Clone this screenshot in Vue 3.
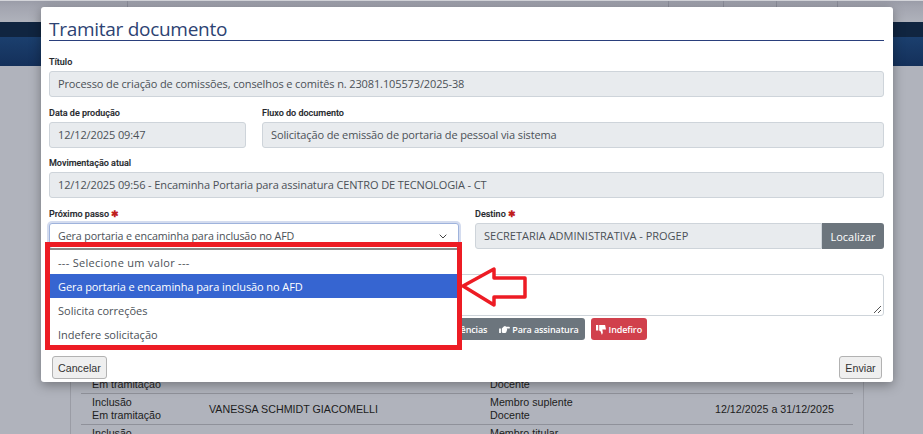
<script setup>
const options = [
  { text: '--- Selecione um valor ---', cls: 'placeholder' },
  { text: 'Gera portaria e encaminha para inclusão no AFD', cls: 'on' },
  { text: 'Solicita correções', cls: '' },
  { text: 'Indefere solicitação', cls: '' }
]
</script>

<template>
  <div class="page">
    <div class="topstrip">
      <i class="tick t1"></i><i class="tick t2"></i><i class="tick t3"></i><i class="tick t4"></i><i class="tick t5"></i>
    </div>
    <div class="nav-dark"></div>
    <div class="nav-blue"></div>
    <div class="panel">
      <div class="row first">
        <div class="c1"><span>Em tramitação</span></div>
        <div class="c2"></div>
        <div class="c3"><span>Docente</span></div>
        <div class="c4"></div>
      </div>
      <div class="row">
        <div class="c1"><span>Inclusão</span><span>Em tramitação</span></div>
        <div class="c2">VANESSA SCHMIDT GIACOMELLI</div>
        <div class="c3"><span>Membro suplente</span><span>Docente</span></div>
        <div class="c4">12/12/2025 a 31/12/2025</div>
      </div>
      <div class="row last">
        <div class="c1"><span>Inclusão</span></div>
        <div class="c2"></div>
        <div class="c3"><span>Membro titular</span></div>
        <div class="c4"></div>
      </div>
    </div>

    <div class="modal">
      <h1 class="title">Tramitar documento</h1>
      <div class="field f1">
        <label>Título</label>
        <div class="input ro">Processo de criação de comissões, conselhos e comitês n. 23081.105573/2025-38</div>
      </div>
      <div class="cols f2">
        <div class="field date">
          <label>Data de produção</label>
          <div class="input ro">12/12/2025 09:47</div>
        </div>
        <div class="field grow">
          <label>Fluxo do documento</label>
          <div class="input ro">Solicitação de emissão de portaria de pessoal via sistema</div>
        </div>
      </div>
      <div class="field f3">
        <label>Movimentação atual</label>
        <div class="input ro">12/12/2025 09:56 - Encaminha Portaria para assinatura CENTRO DE TECNOLOGIA - CT</div>
      </div>
      <div class="cols f4">
        <div class="field half">
          <label>Próximo passo <b class="req">✱</b></label>
          <div class="input select">
            <span>Gera portaria e encaminha para inclusão no AFD</span>
            <svg width="8" height="5" viewBox="0 0 8 5"><path d="M.7.7L4 4l3.300-3.300" fill="none" stroke="#444" stroke-width="1"/></svg>
          </div>
        </div>
        <div class="field grow">
          <label>Destino <b class="req">✱</b></label>
          <div class="group">
            <div class="input ro caps">SECRETARIA ADMINISTRATIVA - PROGEP</div>
            <button class="locate">Localizar</button>
          </div>
        </div>
      </div>
      <div class="textarea">
        <svg class="grip" width="9" height="9" viewBox="0 0 9 9"><path d="M1 8l7-7M5 8l3-3" stroke="#555" stroke-width="1" fill="none"/></svg>
      </div>
      <div class="actions">
        <button class="act gray">
          <span>Pendências</span>
          <span class="sp">
            <svg width="11" height="9" viewBox="0 0 12 10"><path d="M0 4h2v5H0zM3 4l2.500-2.500L7 1l.5 1H11a1 1 0 0 1 0 2H8.500L9 5.200 8.500 6.500 8 8 7 9H4L3 8z" fill="#fff"/></svg>
            Para assinatura
          </span>
        </button>
        <button class="act red">
          <svg width="10" height="11" viewBox="0 0 11 12"><path d="M0 1h2.500v6H0zM3.500 1H10l1 5H7l.5 3.500L6.500 12 5 8 3.500 7z" fill="#fff"/></svg>
          Indefiro
        </button>
      </div>
      <div class="footer">
        <button class="plain">Cancelar</button>
        <button class="plain">Enviar</button>
      </div>

      <ul class="dropdown">
        <li v-for="o in options" :key="o.text" :class="o.cls">{{ o.text }}</li>
      </ul>
    </div>

    <div class="callout"></div>
    <svg class="arrow" width="68" height="44" viewBox="0 0 68 44">
      <path d="M3 21 L34 4 L34 13 L65 13 L65 32 L34 32 L34 40 Z" fill="#fff" stroke="#ed1c24" stroke-width="3.500" stroke-linejoin="round"/>
    </svg>
  </div>
</template>

<style>
html, body { margin: 0; padding: 0; background: #b0b3bc; }
</style>

<style scoped>
.page {
  position: relative;
  width: 923px;
  height: 434px;
  overflow: hidden;
  background: #b0b3bc;
}
.topstrip {
  position: relative;
  height: 22px;
  box-sizing: border-box;
  border-top: 1px solid #d4d5da;
  background: linear-gradient(#9a9ca8 0, #a3a5b0 6px, #b0b3bc 22px);
}
.tick { position: absolute; top: 0; width: 1px; height: 7px; background: #8b8d99; }
.t1 { left: 127px; }
.t2 { left: 668px; }
.t3 { left: 723px; }
.t4 { left: 776px; }
.t5 { left: 837px; }
.nav-dark { height: 15px; background: #102540; }
.nav-blue { height: 29px; background: linear-gradient(#1b3f6e, #14305a); }
.panel {
  position: absolute;
  left: 70px;
  top: 363px;
  width: 794px;
  height: 71px;
  overflow: hidden;
  box-sizing: border-box;
  border-left: 1px solid #9a9ca5;
  border-right: 1px solid #9a9ca5;
  padding: 0 10px;
  font: 10.700px/13px "Liberation Sans", Arial, sans-serif;
  color: #1c1c20;
}
.row {
  display: grid;
  grid-template-columns: 117px 281px 225px 1fr;
  align-items: center;
  height: 31px;
  box-sizing: border-box;
  border-bottom: 1px solid #8f919a;
  padding-left: 11px;
}
.row.first { align-items: end; padding-bottom: 2px; }
.row.last { align-items: start; padding-top: 2px; border-bottom: 0; }
.row span { display: block; }
.c4 { white-space: nowrap; }

.modal {
  position: absolute;
  left: 41px;
  top: 7px;
  width: 852px;
  height: 375px;
  box-sizing: border-box;
  padding: 0 9px 0 8px;
  background: #fff;
  border-radius: 3px;
  box-shadow: 0 3px 12px rgba(0, 0, 0, .35);
}
.title {
  margin: 0;
  height: 34px;
  box-sizing: border-box;
  padding-top: 12px;
  border-bottom: 1px solid #2a3f7c;
  font: 400 19px/21px "Open Sans", sans-serif;
  letter-spacing: -0.28px;
  color: #2d4373;
}
.field { display: flex; flex-direction: column; }
.field label {
  height: 12px;
  margin: 0 0 3px;
  font: 500 9px/13px Roboto, sans-serif;
  color: #24272c;
  -webkit-text-stroke: 0.15px #24272c;
}
.f1 { margin-top: 15px; }
.f2 { margin-top: 10px; }
.f3 { margin-top: 9px; }
.f4 { margin-top: 10px; }
.req { color: #c0201c; font-size: 9px; font-weight: 700; -webkit-text-stroke: 0; }
.input {
  height: 26px;
  box-sizing: border-box;
  padding: 0 8px;
  border: 1px solid #ced4da;
  border-radius: 3px;
  font: 400 11px/24px "Open Sans", sans-serif;
  letter-spacing: -0.12px;
  color: #4b5157;
  white-space: nowrap;
}
.ro { background: #e8ebee; }
.caps { letter-spacing: 0; }
.cols { display: flex; gap: 16px; }
.date { width: 197px; flex: none; }
.grow { flex: 1; min-width: 0; }
.half { width: 410px; flex: none; }
.select {
  display: flex;
  justify-content: space-between;
  align-items: center;
  padding-right: 11px;
  font-size: 10.700px;
  background: #fff;
  border-color: #9fb3dc;
  box-shadow: 0 0 0 2px #d4dcef;
}
.group { display: flex; }
.group .input { flex: 1; border-radius: 3px 0 0 3px; }
.locate {
  width: 62px;
  border: 0;
  padding: 0;
  border-radius: 0 3px 3px 0;
  background: #6c757d;
  color: #fff;
  font: 400 11px "Open Sans", sans-serif;
}
.textarea {
  position: relative;
  height: 42px;
  margin-top: 25px;
  box-sizing: border-box;
  border: 1px solid #ced4da;
  border-radius: 3px;
}
.grip { position: absolute; right: 1px; bottom: 1px; }
.actions { display: flex; gap: 6px; margin-top: 2px; height: 22px; justify-content: flex-end; margin-right: 237px; }
.act {
  display: flex;
  align-items: center;
  gap: 3px;
  height: 22px;
  border: 0;
  padding: 0 6px;
  border-radius: 3px;
  color: #fff;
  font: 600 9px "Open Sans", sans-serif;
  letter-spacing: -0.12px;
  white-space: nowrap;
}
.act .sp { display: flex; align-items: center; gap: 2px; margin-left: 9px; }
.gray { background: #6c757d; }
.red { background: #d1404c; padding: 0 5px; }
.footer { display: flex; justify-content: space-between; margin: 16px 2px 0 3px; }
.plain {
  min-width: 43px;
  height: 23px;
  padding: 0 5px;
  box-sizing: border-box;
  border: 1px solid #b2b2b2;
  border-radius: 3px;
  background: #efefef;
  color: #333;
  font: 10.700px "Liberation Sans", Arial, sans-serif;
}
.dropdown {
  position: absolute;
  left: 9px;
  top: 241px;
  width: 407px;
  margin: 0;
  padding: 0;
  list-style: none;
  background: #fff;
  border-top: 2px solid #8a8a8a;
  font: 400 11px/25px "Open Sans", sans-serif;
  color: #4b5157;
}
.dropdown li { height: 24px; padding-left: 8px; white-space: nowrap; }
.dropdown li.placeholder { letter-spacing: 0.3px; }
.dropdown li.on { background: #3665d1; color: #fff; letter-spacing: -0.09px; }
.callout {
  position: absolute;
  left: 45px;
  top: 242px;
  width: 417px;
  height: 108px;
  box-sizing: border-box;
  border: 5px solid #ed1c24;
}
.arrow { position: absolute; left: 460px; top: 265px; }
</style>
